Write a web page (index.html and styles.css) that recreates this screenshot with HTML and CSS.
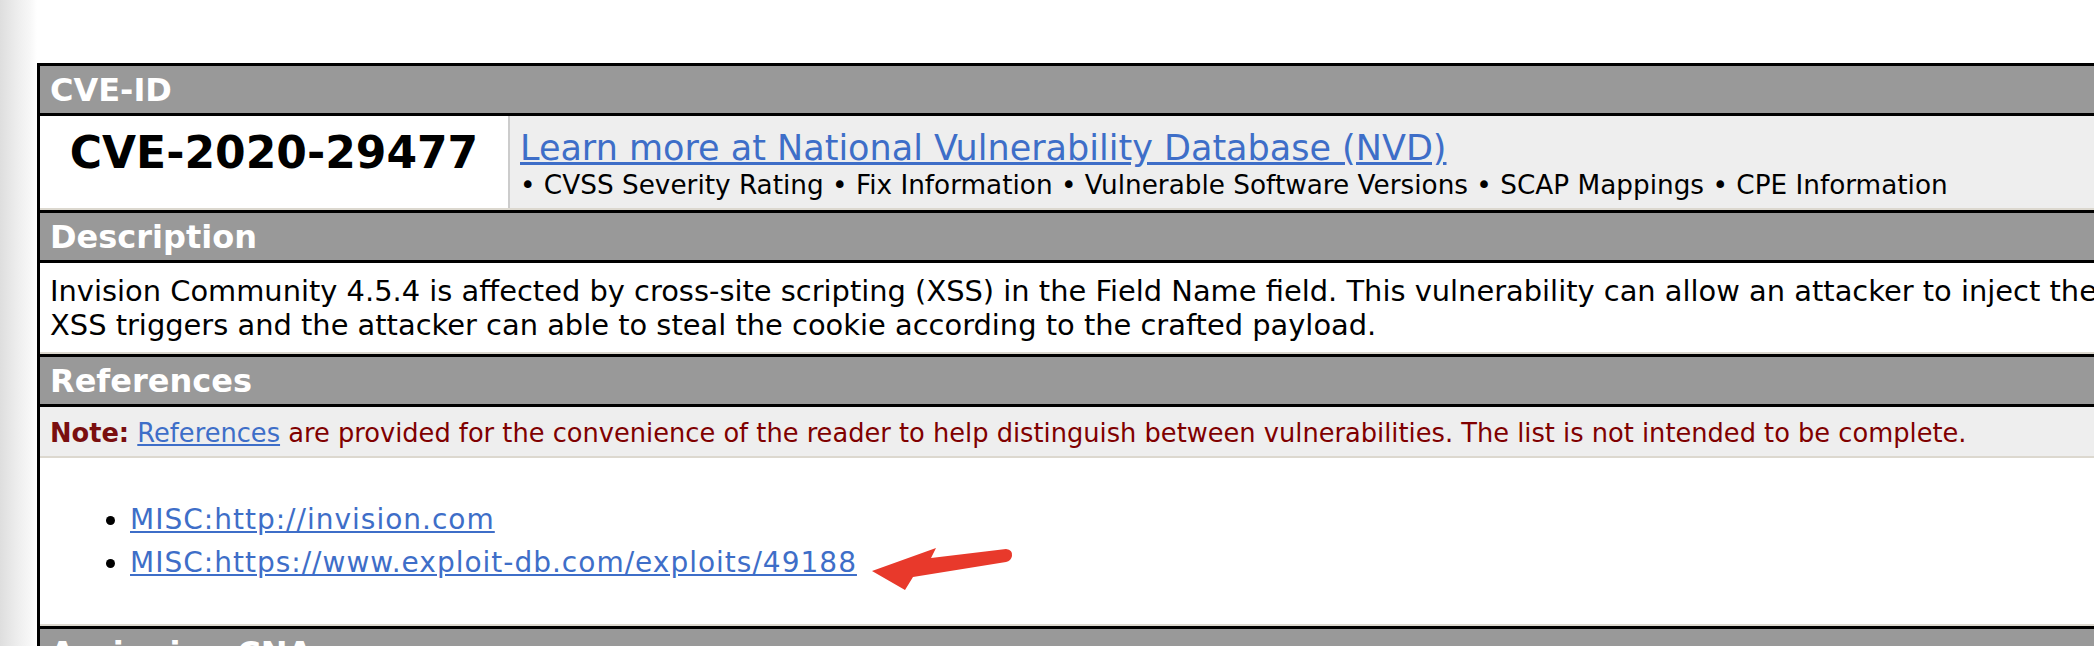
FILE: index.html
```html
<!DOCTYPE html>
<html lang="en">
<head>
<meta charset="utf-8">
<title>CVE-2020-29477</title>
<link rel="stylesheet" href="styles.css">
</head>
<body>
<div class="page">
  <div class="cve">
    <div class="head">CVE-ID</div>
    <div class="idrow">
      <div class="idcell">CVE-2020-29477</div>
      <div class="nvdcell">
        <a class="nvdlink" href="#">Learn more at National Vulnerability Database (NVD)</a>
        <div class="nvdinfo">&bull; CVSS Severity Rating &bull; Fix Information &bull; Vulnerable Software Versions &bull; SCAP Mappings &bull; CPE Information</div>
      </div>
    </div>
    <div class="head">Description</div>
    <div class="body desc">Invision Community 4.5.4 is affected by cross-site scripting (XSS) in the Field Name field. This vulnerability can allow an attacker to inject the XSS payload in Field Name and each time any user will visit the website, the<br>XSS triggers and the attacker can able to steal the cookie according to the crafted payload.</div>
    <div class="head">References</div>
    <div class="body note"><b>Note:</b> <a href="#">References</a> are provided for the convenience of the reader to help distinguish between vulnerabilities. The list is not intended to be complete.</div>
    <div class="body refs">
      <ul>
        <li><a href="#">MISC:http://invision.com</a></li>
        <li><a href="#">MISC:https://www.exploit-db.com/exploits/49188</a></li>
      </ul>
    </div>
    <div class="head">Assigning CNA</div>
  </div>
  <svg class="arrow" width="160" height="50" viewBox="860 545 160 50" aria-hidden="true">
    <path d="M872 571 L936 548 L931 558 L1006 549 Q1013 550 1012 556 Q1011 561 1006 562 L913 577 L905 590 Z" fill="#e8392b"/>
  </svg>
</div>
</body>
</html>
```
FILE: styles.css
```css
html, body {
  margin: 0;
  padding: 0;
  overflow: hidden;
  height: 100%;
}
body {
  background: linear-gradient(to right, #dedede 0, #eeeeee 18px, #f7f7f7 30px, #ffffff 37px);
  font-family: "DejaVu Sans", Verdana, sans-serif;
  color: #000;
}
.page {
  position: relative;
  padding: 63px 0 0 37px;
}
.cve {
  width: 2600px;
  border-top: 3px solid #000;
  border-left: 3px solid #000;
  background: #fff;
}
.head {
  background: #999999;
  color: #fff;
  font-weight: bold;
  font-size: 32px;
  line-height: 49px;
  height: 47px;
  padding-left: 10px;
  border-bottom: 3px solid #000;
}
.body + .head,
.idrow + .head {
  border-top: 3px solid #000;
}
.idrow {
  display: flex;
  border-bottom: 2px solid #dcd8cf;
  height: 92px;
}
.idcell {
  width: 470px;
  flex: none;
  text-align: center;
  font-weight: bold;
  font-size: 44px;
  padding-top: 11px;
  border-right: 2px solid #cccccc;
  box-sizing: border-box;
}
.nvdcell {
  flex: 1;
  background: #eeeeee;
  padding: 14px 10px 0;
}
a {
  color: #3e6ec8;
}
.nvdlink {
  display: block;
  font-size: 35px;
  line-height: 36px;
}
.nvdinfo {
  font-size: 26.3px;
  line-height: 38px;
}
.body {
  border-bottom: 2px solid #dcd8cf;
  padding: 0 10px;
}
.desc {
  font-size: 28.9px;
  line-height: 34px;
  padding-top: 11px;
  padding-bottom: 10px;
  white-space: nowrap;
}
.note {
  background: #eeeeee;
  color: #800000;
  font-size: 25.7px;
  line-height: 30px;
  padding-top: 11px;
  padding-bottom: 8px;
}
.note b {
  color: #7a0f0f;
}
.refs {
  height: 168px;
  box-sizing: border-box;
  overflow: hidden;
}
.refs ul {
  margin: 45px 0 0;
  padding-left: 80px;
  font-size: 28px;
  line-height: 34px;
  letter-spacing: 1px;
}
.refs li + li {
  margin-top: 9px;
}
.arrow {
  position: absolute;
  left: 860px;
  top: 545px;
}
```
